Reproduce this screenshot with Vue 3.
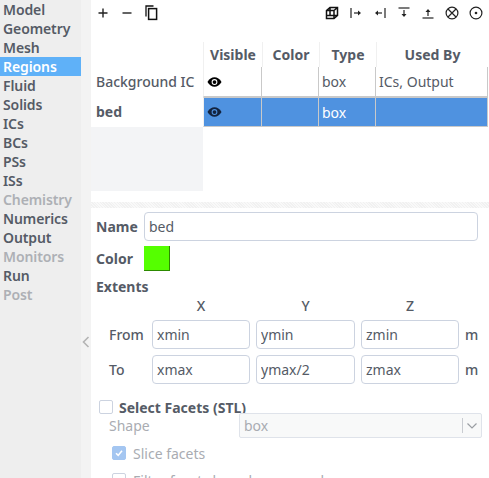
<template>
  <div class="app">
    <nav class="sidebar">
      <div
        v-for="item in navItems"
        :key="item.name"
        class="nav-item"
        :class="{ active: item.name === 'Regions', disabled: item.disabled }"
      >{{ item.name }}</div>
    </nav>
    <div class="handle">
      <svg width="10" height="14" viewBox="0 0 10 14"><path d="M7.5 2 L2.5 7 L7.5 12" fill="none" stroke="#b4b4b4" stroke-width="1.6" /></svg>
    </div>
    <main class="main">
      <div class="toolbar">
        <div class="tools">
          <svg width="14" height="14" viewBox="0 0 14 14"><path d="M7 2.5v9M2.5 7h9" stroke="#222" stroke-width="1.4" /></svg>
          <svg width="14" height="14" viewBox="0 0 14 14"><path d="M2.5 7h9" stroke="#222" stroke-width="1.4" /></svg>
          <svg width="14" height="16" viewBox="0 0 14 16"><path d="M9.5 1H2v10.5" fill="none" stroke="#111" stroke-width="1.3" /><rect x="4.6" y="3.6" width="8" height="10.8" fill="none" stroke="#111" stroke-width="1.5" /></svg>
        </div>
        <div class="tools">
          <svg width="14" height="14" viewBox="0 0 14 14"><path d="M1.5 4.5 5 1.5h7.5v8L9 12.5H1.5zM1.5 4.5H9v8M9 4.5l3.5-3M5 1.5v8H1.500M5 9.500h7.500" fill="none" stroke="#111" stroke-width="1.5" /></svg>
          <svg width="14" height="12" viewBox="0 0 14 12"><path d="M2 1v10" stroke="#222" stroke-width="1.2" /><path d="M5 6h5" stroke="#222" stroke-width="1.2" /><path d="M9 3.500 12 6 9 8.500z" fill="#222" /></svg>
          <svg width="14" height="12" viewBox="0 0 14 12"><path d="M12 1v10" stroke="#222" stroke-width="1.2" /><path d="M4 6h5" stroke="#222" stroke-width="1.2" /><path d="M5 3.500 2 6 5 8.500z" fill="#222" /></svg>
          <svg width="14" height="14" viewBox="0 0 14 14"><path d="M1.500 2h11" stroke="#222" stroke-width="1.2" /><path d="M7 4v5" stroke="#222" stroke-width="1.2" /><path d="M4.500 8 7 11l2.500-3z" fill="#222" /></svg>
          <svg width="14" height="14" viewBox="0 0 14 14"><path d="M1.500 12h11" stroke="#222" stroke-width="1.2" /><path d="M7 5v5" stroke="#222" stroke-width="1.2" /><path d="M4.500 6 7 3l2.500 3z" fill="#222" /></svg>
          <svg width="14" height="14" viewBox="0 0 14 14"><circle cx="7" cy="7" r="5.900" fill="none" stroke="#222" stroke-width="1.2" /><path d="M3 3l8 8M11 3l-8 8" stroke="#222" stroke-width="1.2" /></svg>
          <svg width="14" height="14" viewBox="0 0 14 14"><circle cx="7" cy="7" r="5.900" fill="none" stroke="#222" stroke-width="1.2" /><circle cx="7" cy="7" r="1.300" fill="#222" /></svg>
        </div>
      </div>

      <div class="table">
        <div class="names">
          <div class="name-head"></div>
          <div v-for="row in rows" :key="row.name" class="name-cell" :class="{ selected: row.selected }">{{ row.name }}</div>
          <div class="name-empty"></div>
        </div>
        <div class="grid">
          <div class="th">Visible</div>
          <div class="th">Color</div>
          <div class="th">Type</div>
          <div class="th">Used By</div>
          <template v-for="row in rows" :key="row.name">
            <div class="td" :class="{ selected: row.selected }">
              <svg width="15" height="12" viewBox="0 0 16 12">
                <path d="M0.500 6C2.500 2.600 5 1 8 1s5.500 1.600 7.500 5C13.500 9.400 11 11 8 11S2.500 9.400 0.500 6z" :fill="row.selected ? '#12233f' : '#000'" />
                <circle cx="8" cy="6" r="3.100" :fill="row.selected ? '#4f92e0' : '#fff'" />
                <circle cx="8" cy="6" r="2" :fill="row.selected ? '#12233f' : '#000'" />
              </svg>
            </div>
            <div class="td" :class="{ selected: row.selected }"></div>
            <div class="td" :class="{ selected: row.selected }">{{ row.type }}</div>
            <div class="td" :class="{ selected: row.selected }">{{ row.usedBy }}</div>
          </template>
        </div>
      </div>

      <div class="splitter"></div>

      <div class="form">
        <div class="field-row">
          <label class="bold row-label">Name</label>
          <input class="input grow" value="bed" />
        </div>
        <div class="color-row">
          <label class="bold row-label">Color</label>
          <div class="swatch"></div>
        </div>
        <div class="bold extents">Extents</div>
        <div class="extent-grid">
          <span></span>
          <div class="axis">X</div>
          <div class="axis">Y</div>
          <div class="axis">Z</div>
          <span></span>
          <template v-for="row in extents" :key="row.label">
            <div class="extent-label">{{ row.label }}</div>
            <input v-for="v in row.values" :key="v" class="input" :value="v" />
            <div class="unit">m</div>
          </template>
        </div>
        <label class="facets">
          <span class="check"></span>
          <span class="bold">Select Facets (STL)</span>
        </label>
        <div class="shape-row">
          <span class="muted">Shape</span>
          <div class="select">
            <span>box</span>
            <span class="select-arrow">
              <svg width="12" height="8" viewBox="0 0 12 8"><path d="M1.500 1.500 6 6l4.500-4.500" fill="none" stroke="#9a9ea3" stroke-width="1.200" /></svg>
            </span>
          </div>
        </div>
        <label class="sub-check">
          <span class="check checked">
            <svg width="10" height="10" viewBox="0 0 10 10"><path d="M2 5.200 4.200 7.400 8 2.800" fill="none" stroke="#fff" stroke-width="1.600" /></svg>
          </span>
          <span class="muted">Slice facets</span>
        </label>
        <label class="sub-check filter">
          <span class="check"></span>
          <span class="muted">Filter facets based on normal</span>
        </label>
      </div>
    </main>
  </div>
</template>

<script setup>
const navItems = [
  { name: 'Model' },
  { name: 'Geometry' },
  { name: 'Mesh' },
  { name: 'Regions' },
  { name: 'Fluid' },
  { name: 'Solids' },
  { name: 'ICs' },
  { name: 'BCs' },
  { name: 'PSs' },
  { name: 'ISs' },
  { name: 'Chemistry', disabled: true },
  { name: 'Numerics' },
  { name: 'Output' },
  { name: 'Monitors', disabled: true },
  { name: 'Run' },
  { name: 'Post', disabled: true }
]

const rows = [
  { name: 'Background IC', type: 'box', usedBy: 'ICs, Output' },
  { name: 'bed', type: 'box', usedBy: '', selected: true }
]

const extents = [
  { label: 'From', values: ['xmin', 'ymin', 'zmin'] },
  { label: 'To', values: ['xmax', 'ymax/2', 'zmax'] }
]
</script>

<style>
html, body {
  margin: 0;
  overflow: hidden;
  background: #fff;
}
</style>

<style scoped>
.app {
  display: flex;
  width: 489px;
  height: 478px;
  overflow: hidden;
  font-family: "Noto Sans", "Open Sans", sans-serif;
  font-size: 14px;
  color: #555b66;
  background: #fff;
}

.sidebar {
  width: 81px;
  flex: none;
  background: #eeeeee;
}

.nav-item {
  height: 19px;
  line-height: 19px;
  padding-left: 3px;
  font-weight: 600;
  letter-spacing: -0.1px;
}

.nav-item.active {
  background: #5fb1f8;
  color: #fff;
}

.nav-item.disabled {
  color: #adb0b5;
}

.handle {
  width: 10px;
  flex: none;
  background: #f3f3f3;
  box-sizing: border-box;
  padding-top: 334px;
}

.main {
  flex: 1;
  min-width: 0;
}

.toolbar {
  height: 42px;
  display: flex;
  justify-content: space-between;
  align-items: flex-start;
  padding: 5px 6px 0 5px;
  box-sizing: border-box;
}

.tools {
  display: flex;
  align-items: center;
  gap: 10px;
  height: 16px;
}

.table {
  display: flex;
  height: 159px;
  width: 397px;
}

.names {
  width: 112px;
  flex: none;
  display: flex;
  flex-direction: column;
}

.name-head {
  height: 25px;
}

.name-cell {
  height: 30px;
  line-height: 30px;
  padding-left: 5px;
  font-weight: 500;
  white-space: nowrap;
  overflow: hidden;
}

.name-cell.selected {
  font-weight: 700;
}

.name-empty {
  height: 64px;
  background: #f3f4f6;
}

.grid {
  display: grid;
  grid-template-columns: 59px 57px 57px 112px;
  grid-template-rows: 25px 30px 30px;
  width: 285px;
}

.th {
  text-align: center;
  font-weight: 700;
  line-height: 25px;
  border-left: 1px solid #f0f0f0;
  box-sizing: border-box;
  white-space: nowrap;
}

.td {
  border-right: 1px solid #c9c9c9;
  border-bottom: 1px solid #c9c9c9;
  box-sizing: border-box;
  padding-left: 3px;
  line-height: 29px;
  white-space: nowrap;
  display: flex;
  align-items: center;
}

.td:nth-child(4n + 1) {
  border-left: 1px solid #f0f0f0;
}

.td.selected {
  background: #4f92e0;
  color: #fff;
  border-top: 1px solid #c9c9c9;
}

.splitter {
  height: 6px;
  margin-top: 1px;
  background: repeating-linear-gradient(45deg, #f1f1f1 0 1px, #f9f9f9 1px 2px);
}

.form {
  padding: 4px 11px 0 5px;
}

.bold {
  font-weight: 700;
}

.field-row,
.color-row {
  display: flex;
  align-items: center;
}

.row-label {
  width: 48px;
  flex: none;
}

.input {
  height: 29px;
  box-sizing: border-box;
  border: 1px solid #ccd3e0;
  border-radius: 4px;
  padding: 0 4px;
  font: inherit;
  color: inherit;
  background: #fff;
  min-width: 0;
  width: 100%;
  outline: none;
}

.grow {
  flex: 1;
}

.color-row {
  margin-top: 5px;
  height: 25px;
}

.swatch {
  width: 26px;
  height: 25px;
  box-sizing: border-box;
  background: #55ff00;
  border-right: 1px solid #2c8a00;
  border-bottom: 1px solid #2c8a00;
}

.extents {
  margin-top: 6px;
  line-height: 19px;
}

.extent-grid {
  display: grid;
  grid-template-columns: 56px 104px 105px 104px 22px;
  grid-template-rows: 18px 29px 29px;
  row-gap: 6px;
}

.axis {
  text-align: center;
  font-weight: 500;
  line-height: 19px;
  padding-right: 6px;
}

.extent-grid .input {
  width: calc(100% - 6px);
}

.extent-label {
  padding-left: 13px;
  line-height: 29px;
  font-weight: 500;
}

.unit {
  line-height: 29px;
  font-weight: 500;
}

.facets {
  display: flex;
  align-items: center;
  gap: 6px;
  margin: 15px 0 0 3px;
  height: 16px;
}

.check {
  width: 14px;
  height: 14px;
  flex: none;
  box-sizing: border-box;
  border: 1px solid #ccd3e0;
  border-radius: 2px;
  background: #fff;
  display: inline-flex;
  align-items: center;
  justify-content: center;
}

.check.checked {
  background: #a4c6f1;
  border-color: #a4c6f1;
}

.muted {
  color: #a9acb2;
}

.shape-row {
  display: flex;
  align-items: center;
  height: 25px;
  margin-top: -2px;
  padding-left: 13px;
  margin-right: -4px;
}

.shape-row .muted {
  width: 130px;
  flex: none;
}

.select {
  flex: 1;
  height: 25px;
  box-sizing: border-box;
  border: 1px solid #dfe3ea;
  border-radius: 2px;
  background: #f8f9f9;
  color: #a9acb2;
  padding-left: 4px;
  display: flex;
  align-items: center;
  justify-content: space-between;
}

.select-arrow {
  width: 18px;
  height: 15px;
  border-left: 1px solid #c9ccd1;
  display: flex;
  align-items: center;
  justify-content: center;
}

.sub-check {
  display: flex;
  align-items: center;
  gap: 7px;
  margin: 7px 0 0 16px;
  height: 16px;
}

.filter {
  margin-top: 11px;
}
</style>
